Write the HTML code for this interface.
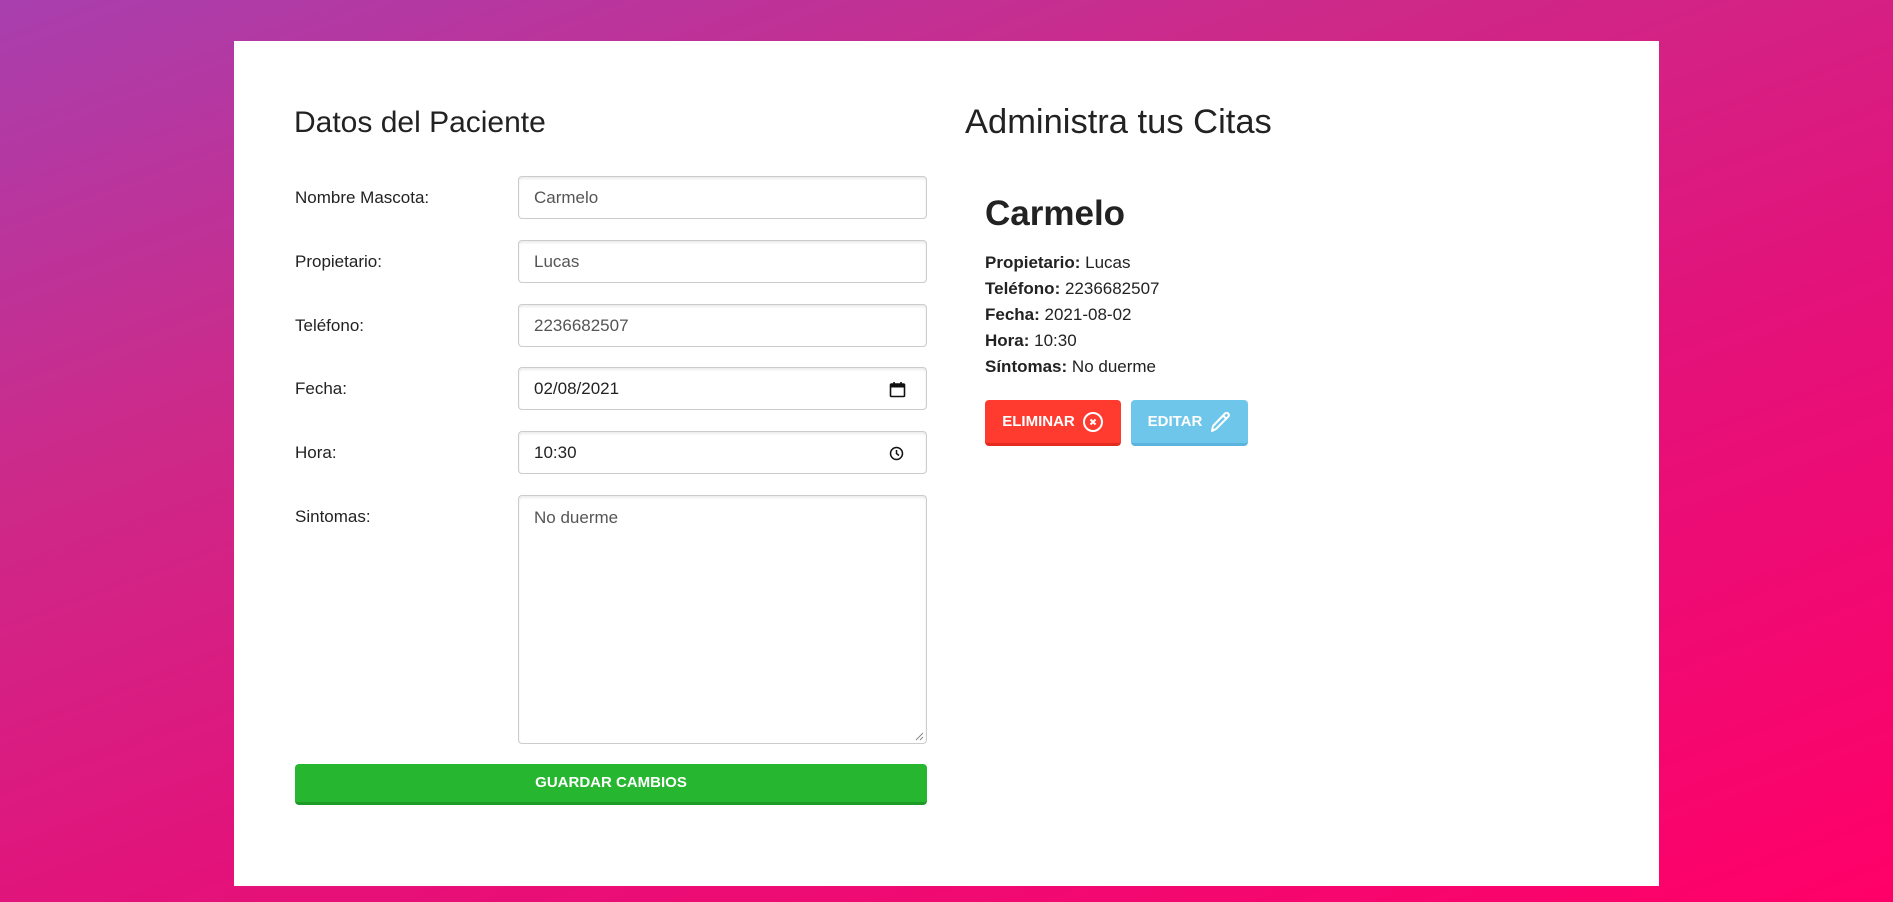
<!DOCTYPE html>
<html><head><meta charset="utf-8"><style>
*{box-sizing:border-box;margin:0;padding:0}
body{width:1893px;height:902px;overflow:hidden;font-family:"Liberation Sans",Arial,sans-serif;color:#222;
background:linear-gradient(160deg,#a83fae 0%,#cc2a8a 30%,#e3127a 60%,#ff0068 100%);position:relative}
.card{position:absolute;left:234px;top:41px;width:1425px;height:845px;background:#fff}
.abs{position:absolute}
h2{font-weight:normal;font-size:30px;color:#222}
.lbl{position:absolute;left:295px;font-size:17px;height:43px;line-height:43px;color:#222}
.inp{position:absolute;left:518px;width:409px;height:43px;border:1px solid #ccc;border-radius:4px;box-shadow:inset 0 2px 2px rgba(0,0,0,.08);font-size:17px;line-height:41px;padding-left:15px;color:#555}
.det{font-size:17px;line-height:26px;color:#222}
.btn{position:absolute;top:400px;height:46px;border-radius:4px;color:#fff;font-weight:bold;font-size:15px;display:flex;align-items:center;justify-content:center;gap:7px}
</style></head><body>
<div class="card"></div>
<h2 class="abs" style="left:294px;top:106px">Datos del Paciente</h2>
<h2 class="abs" style="left:965px;top:103px;font-size:34.5px">Administra tus Citas</h2>

<div class="lbl" style="top:176px">Nombre Mascota:</div><div class="inp" style="top:176px">Carmelo</div>
<div class="lbl" style="top:240px">Propietario:</div><div class="inp" style="top:240px">Lucas</div>
<div class="lbl" style="top:304px">Teléfono:</div><div class="inp" style="top:304px">2236682507</div>
<div class="lbl" style="top:367px">Fecha:</div><div class="inp" style="top:367px;color:#222">02/08/2021
<svg class="abs" style="right:20px;top:13px" width="17" height="17" viewBox="0 0 17 17"><rect x="1.5" y="3" width="14" height="12.5" rx="1" fill="none" stroke="#111" stroke-width="1.6"/><rect x="1.5" y="3" width="14" height="3.5" fill="#111"/><line x1="5" y1="1" x2="5" y2="4" stroke="#111" stroke-width="1.6"/><line x1="12" y1="1" x2="12" y2="4" stroke="#111" stroke-width="1.6"/></svg></div>
<div class="lbl" style="top:431px">Hora:</div><div class="inp" style="top:431px;color:#222">10:30
<svg class="abs" style="right:22px;top:14px" width="15" height="15" viewBox="0 0 15 15"><circle cx="7.5" cy="7.5" r="6" fill="none" stroke="#111" stroke-width="1.5"/><path d="M7.5 4v3.5l2.5 2" fill="none" stroke="#111" stroke-width="1.5"/></svg></div>
<div class="lbl" style="top:495px">Sintomas:</div><div class="inp" style="top:495px;height:249px;line-height:normal;padding-top:12px">No duerme
<svg class="abs" style="right:2px;bottom:2px" width="10" height="10"><path d="M9 2L2 9M9 6L6 9" stroke="#888" stroke-width="1"/></svg></div>

<div class="abs" style="left:295px;top:764px;width:632px;height:41px;background:#26b62f;border-bottom:3px solid #1e9a27;border-radius:4px;color:#fff;font-weight:bold;font-size:15px;text-align:center;line-height:38px">GUARDAR CAMBIOS</div>

<div class="abs" style="left:985px;top:194px;font-size:35px;font-weight:bold;color:#222">Carmelo</div>
<div class="abs det" style="left:985px;top:250px">
<div><b>Propietario:</b> Lucas</div>
<div><b>Teléfono:</b> 2236682507</div>
<div><b>Fecha:</b> 2021-08-02</div>
<div><b>Hora:</b> 10:30</div>
<div><b>Síntomas:</b> No duerme</div>
</div>
<div class="btn" style="left:985px;width:136px;background:#ff3b30;border-bottom:3px solid #e52b20">ELIMINAR
<svg width="22" height="22" viewBox="0 0 22 22"><circle cx="11" cy="11" r="9" fill="none" stroke="#fff" stroke-width="2"/><path d="M8.5 8.5l5 5M13.5 8.5l-5 5" stroke="#fff" stroke-width="2"/></svg></div>
<div class="btn" style="left:1131px;width:117px;background:#6ec6ea;border-bottom:3px solid #5ab4dd">EDITAR
<svg width="22" height="24" viewBox="0 0 22 24"><path d="M3 21l1-5L16 3.5a2.2 2.2 0 0 1 3.2 3.2L7 19z M14 5.5l3 3" fill="none" stroke="#fff" stroke-width="2" stroke-linejoin="round"/></svg></div>
</body></html>
